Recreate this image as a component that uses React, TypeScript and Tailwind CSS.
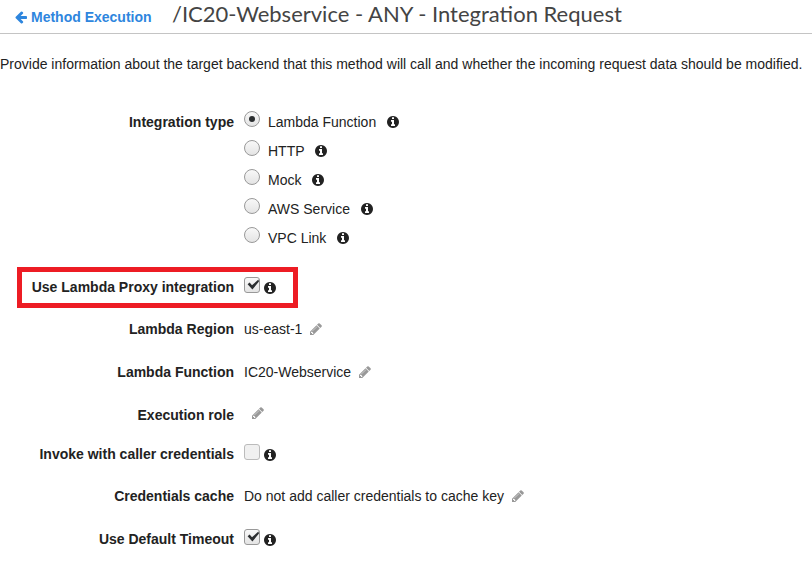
import type { ReactNode } from 'react';

const INFO =
  'M1152 1376v-160q0-14-9-23t-23-9h-96v-512q0-14-9-23t-23-9h-320q-14 0-23 9t-9 23v160q0 14 9 23t23 9h96v320h-96q-14 0-23 9t-9 23v160q0 14 9 23t23 9h448q14 0 23-9t9-23zm-128-896v-160q0-14-9-23t-23-9h-192q-14 0-23 9t-9 23v160q0 14 9 23t23 9h192q14 0 23-9t9-23zm640 416q0 209-103 385.5t-279.5 279.5-385.5 103-385.5-103-279.5-279.5-103-385.5 103-385.5 279.5-279.5 385.5-103 385.5 103 279.5 279.5 103 385.5z';
const PENCIL =
  'M491 1536l91-91-235-235-91 91v107h128v128h107zm523-928q0-22-22-22-10 0-17 7l-542 542q-7 7-7 17 0 22 22 22 10 0 17-7l542-542q7-7 7-17zm-54-192l416 416-832 832h-416v-416zm683 96q0 53-37 90l-166 166-416-416 166-165q36-38 90-38 53 0 91 38l235 234q37 39 37 91z';
const ARROW =
  'M1664 896v128q0 53-32.5 90.5t-84.5 37.5h-704l293 294q38 36 38 90t-38 90l-75 76q-37 37-90 37-52 0-91-37l-651-652q-37-37-37-90 0-52 37-91l651-650q38-38 91-38 52 0 90 38l75 74q38 38 38 91t-38 91l-293 293h704q52 0 84.5 37.5t32.5 90.5z';

function Icon({ d, className }: { d: string; className: string }) {
  return (
    <svg viewBox="0 0 1792 1792" fill="currentColor" className={`size-[14px] shrink-0 ${className}`}>
      <path d={d} />
    </svg>
  );
}

function Radio({ label, checked }: { label: string; checked?: boolean }) {
  return (
    <div className="flex h-[29px] items-start">
      <span className="-mt-px flex size-4 shrink-0 items-center justify-center rounded-full border border-[#999] bg-linear-to-b from-[#f8f8f8] to-[#e4e4e4]">
        {checked && <span className="size-[6px] rounded-full bg-[#2b2e30]" />}
      </span>
      <span className="ml-2">{label}</span>
      <Icon d={INFO} className="mt-[3px] ml-[9.7px]" />
    </div>
  );
}

function Checkbox({ checked }: { checked?: boolean }) {
  return (
    <span
      className={`size-4 shrink-0 rounded-[3px] border ${
        checked ? 'border-[#999] bg-linear-to-b from-[#f8f8f8] to-[#e4e4e4]' : 'border-[#bbb] bg-[#f0f0f0]'
      }`}
    >
      {checked && (
        <svg viewBox="0 0 14 14" className="size-[14px]">
          <path d="M2.6 6.2 4.6 4.6 7 7.2 13.4 1.6 14 3.4 7.4 11.6Z" fill="#2b2e30" />
        </svg>
      )}
    </span>
  );
}

function Row({ label, className, children }: { label: string; className: string; children: ReactNode }) {
  return (
    <div className={`flex items-start ${className}`}>
      <div className="w-[234px] shrink-0 text-right font-bold">{label}</div>
      <div className="ml-[10px] flex items-start">{children}</div>
    </div>
  );
}

export default function App() {
  return (
    <div className="h-[561px] w-[812px] overflow-hidden bg-white font-['Liberation_Sans',Arial,sans-serif] text-[14px] leading-5 whitespace-nowrap text-[#222]">
      <header className="flex h-[34px] items-start border-b border-[#c4c4c4]">
        <a className="mt-[7px] flex w-[159px] shrink-0 pl-[14px] font-bold text-[#2e86de]">
          <Icon d={ARROW} className="mt-[3px] mr-[3px]" />
          Method Execution
        </a>
        <h1 className="ml-[13px] font-[Lato,sans-serif] text-[22px] leading-7 text-[#444]">
          /IC20-Webservice - ANY - Integration Request
        </h1>
      </header>
      <p className="mt-5">
        Provide information about the target backend that this method will call and whether the incoming request data
        should be modified.
      </p>
      <main>
        <Row label="Integration type" className="mt-[38px] h-[145px]">
          <div>
            <Radio label="Lambda Function" checked />
            <Radio label="HTTP" />
            <Radio label="Mock" />
            <Radio label="AWS Service" />
            <Radio label="VPC Link" />
          </div>
        </Row>
        <div className="mt-[10px] ml-[17px] h-[41px] w-[281px] border-[5px] border-[#ed1c24]">
          <Row label="Use Lambda Proxy integration" className="mt-[5px] -ml-[22px]">
            <Checkbox checked />
            <Icon d={INFO} className="mt-[4px] ml-[3px]" />
          </Row>
        </div>
        <Row label="Lambda Region" className="mt-[11px] h-[43px]">
          us-east-1
          <Icon d={PENCIL} className="mt-[3px] ml-[7px] text-[#999]" />
        </Row>
        <Row label="Lambda Function" className="h-[43px]">
          IC20-Webservice
          <Icon d={PENCIL} className="mt-[3px] ml-[7px] text-[#999]" />
        </Row>
        <Row label="Execution role" className="h-[39px]">
          <Icon d={PENCIL} className="mt-px ml-[7px] text-[#999]" />
        </Row>
        <Row label="Invoke with caller credentials" className="h-[42px]">
          <Checkbox />
          <Icon d={INFO} className="mt-[4px] ml-[3px]" />
        </Row>
        <Row label="Credentials cache" className="h-[43px]">
          Do not add caller credentials to cache key
          <Icon d={PENCIL} className="mt-[3px] ml-[7px] text-[#999]" />
        </Row>
        <Row label="Use Default Timeout" className="h-5">
          <Checkbox checked />
          <Icon d={INFO} className="mt-[4px] ml-[3px]" />
        </Row>
      </main>
    </div>
  );
}
